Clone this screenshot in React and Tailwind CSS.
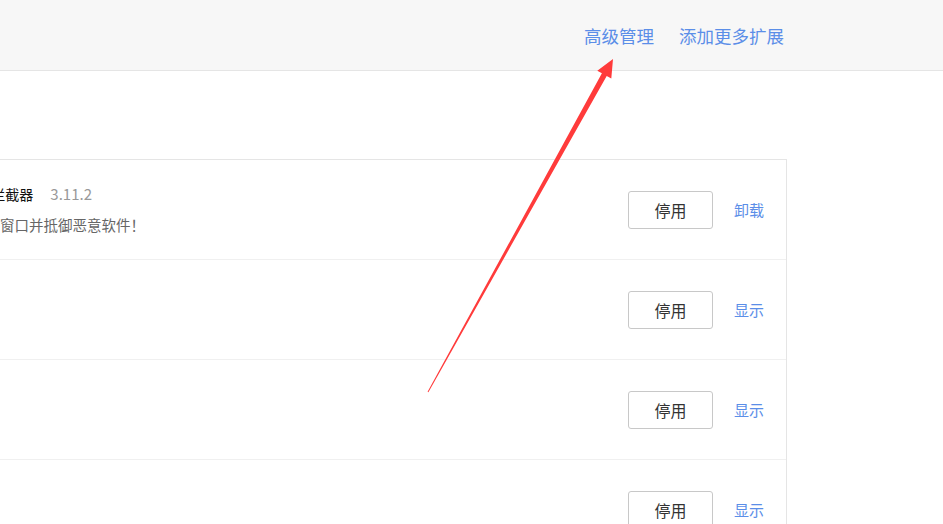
// App.jsx
const font = { fontFamily: '"Noto Sans CJK SC", "Liberation Sans", sans-serif' };

const rows = [
  {
    name: "Adblock Plus - 免费的广告拦截器",
    version: "3.11.2",
    desc: "拦截广告、阻止跟踪和弹出窗口并抵御恶意软件！",
    action: "卸载",
  },
  { name: "网页翻译助手", version: "", desc: "快速翻译网页中的内容", action: "显示" },
  { name: "截图工具", version: "", desc: "一键截取网页的可见区域", action: "显示" },
  { name: "书签管理器", version: "", desc: "整理并同步你的收藏夹", action: "显示" },
];

const Arrow = () => (
  <svg
    className="pointer-events-none absolute inset-0"
    width="943"
    height="524"
    viewBox="0 0 943 524"
  >
    <polygon
      fill="#ff3b3b"
      points="428.4,392.2 606.7,76.1 611.3,78.6 613,59 597.3,70.8 601.9,73.3 427.6,391.8"
    />
  </svg>
);

export default function App() {
  return (
    <div className="relative h-[524px] w-full overflow-hidden bg-white" style={font}>
      {/* top bar */}
      <header className="flex h-[71px] items-center justify-end gap-[25px] border-b border-[#e5e5e5] bg-[#f7f7f7] pr-[159px] pt-[3px] text-[17.5px] text-[#5b8ee8]">
        <a className="cursor-pointer">高级管理</a>
        <a className="cursor-pointer">添加更多扩展</a>
      </header>

      {/* extension list */}
      <div className="pt-[88px]">
        <div className="-ml-[400px] w-[1187px] border border-[#e5e5e5]">
          {rows.map((r, i) => (
            <div
              key={i}
              className="flex h-[100px] items-center border-b border-[#f0f0f0] pl-[137px] pr-[22px]"
            >
              <div className="mr-6 h-16 w-16 shrink-0 rounded bg-[#e8eef8]" />
              <div className="flex-1">
                <div className="flex items-center text-[14px] leading-[20px] text-[#111]">
                  <span>{r.name}</span>
                  {r.version && (
                    <span className="ml-[17px] text-[15px] text-[#999]">{r.version}</span>
                  )}
                </div>
                <div className="mt-[11px] text-[14.5px] leading-[20px] text-[#666]">{r.desc}</div>
              </div>
              <button className="h-[38px] w-[85px] rounded-[3px] border border-[#c8c8c8] bg-white text-[16px] text-[#333]">
                停用
              </button>
              <a className="ml-[21px] cursor-pointer pt-[2px] text-[15px] text-[#5b8ee8]">{r.action}</a>
            </div>
          ))}
        </div>
      </div>

      <Arrow />
    </div>
  );
}
